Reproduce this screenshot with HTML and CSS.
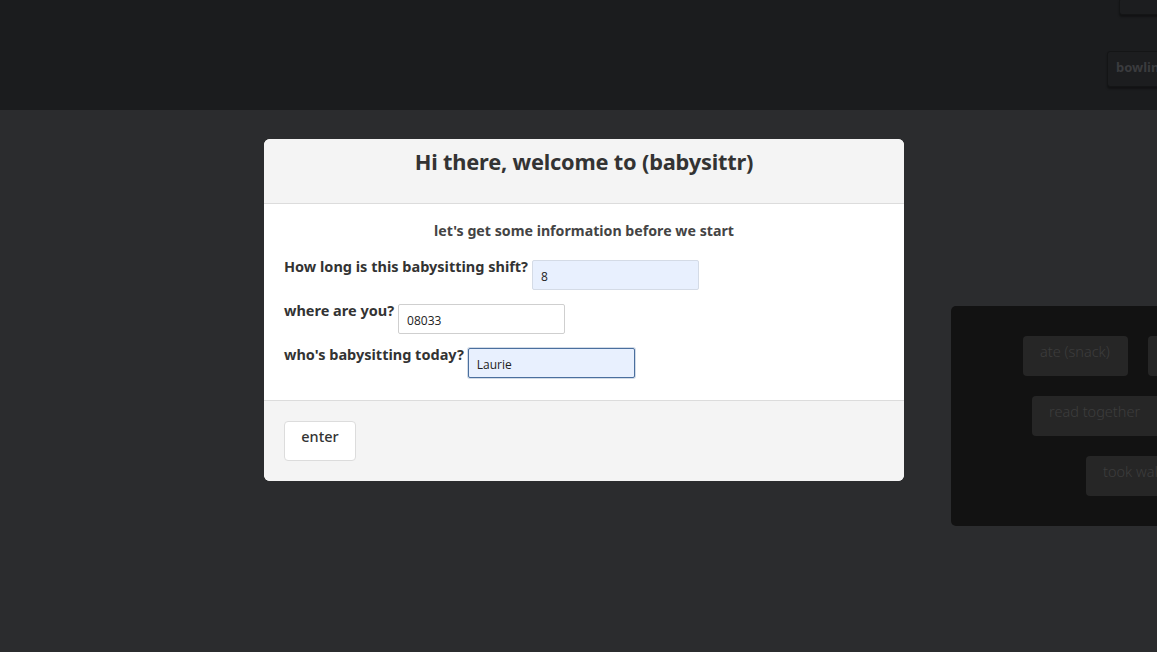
FILE: index.html
```html
<!DOCTYPE html>
<html>
<head>
<meta charset="utf-8">
<link rel="stylesheet" href="styles.css">
</head>
<body>
<div class="page">
  <header class="topbar">
    <div class="top-actions">
      <div class="ghost-btn top-btn"></div>
      <div class="ghost-btn bowl-btn">bowling</div>
    </div>
  </header>
  <main class="main">
    <section class="panel">
      <div class="prow r1"><span class="pbtn">ate (snack)</span><span class="pbtn">napped</span></div>
      <div class="prow r2"><span class="pbtn">read together</span></div>
      <div class="prow r3"><span class="pbtn">took walk</span></div>
    </section>
  </main>
</div>
<div class="overlay">
  <div class="modal">
    <div class="modal-head">
      <h1 class="title">Hi there, welcome to (babysittr)</h1>
    </div>
    <div class="modal-body">
      <p class="intro">let's get some information before we start</p>
      <div class="field"><label class="lbl">How long is this babysitting shift?</label><input class="inp filled" value="8"></div>
      <div class="field"><label class="lbl">where are you?</label><input class="inp" value="08033"></div>
      <div class="field"><label class="lbl">who's babysitting today?</label><input class="inp focused" value="Laurie"></div>
    </div>
    <div class="modal-foot">
      <button class="enter">enter</button>
    </div>
  </div>
</div>
</body>
</html>
```
FILE: styles.css
```css
* { box-sizing: border-box; }
html, body { margin: 0; padding: 0; }
body {
  width: 1157px;
  height: 652px;
  overflow: hidden;
  background: #2b2c2e;
  font-family: "Noto Sans", "Open Sans", sans-serif;
  position: relative;
}
.page { display: flex; flex-direction: column; height: 652px; }
.topbar {
  height: 110px;
  background: #1b1c1e;
  display: flex;
  justify-content: flex-end;
}
.top-actions {
  display: flex;
  flex-direction: column;
  align-items: flex-end;
  margin-right: -60px;
}
.ghost-btn {
  border: 1px solid #141516;
  box-shadow: 0 2px 2px rgba(0,0,0,0.35);
  background: #1c1d1f;
  border-radius: 3px;
}
.top-btn { width: 98px; height: 17px; margin-top: -2px; }
.bowl-btn {
  margin-top: 36px;
  width: 110px;
  height: 36px;
  color: #3a3b3e;
  font-weight: 700;
  font-size: 13px;
  padding: 6px 0 0 8px;
}
.main { flex: 1; display: flex; justify-content: flex-end; }
.panel {
  margin-top: 196px;
  width: 260px;
  height: 220px;
  margin-right: -54px;
  background: #121212;
  border-radius: 5px;
  padding-top: 30px;
}
.prow { display: flex; gap: 20px; height: 40px; margin-bottom: 20px; }
.r1 { padding-left: 72px; }
.r2 { padding-left: 81px; }
.r3 { padding-left: 135px; }
.pbtn {
  background: #262626;
  color: #3d3d3d;
  border-radius: 4px;
  height: 40px;
  padding: 5px 18px 0 17px;
  font-size: 14.5px;
  font-weight: 300;
  white-space: nowrap;
}
.r2 .pbtn { padding-right: 40px; }
.overlay {
  position: absolute;
  inset: 0;
  display: flex;
  justify-content: center;
  align-items: flex-start;
  padding-top: 139px;
}
.modal {
  width: 640px;
  margin-left: 11px;
  background: #fff;
  border-radius: 6px;
  overflow: hidden;
}
.modal-head {
  height: 65px;
  background: #f4f4f4;
  border-bottom: 1px solid #dcdcdc;
  padding-top: 8px;
}
.title {
  margin: 0;
  text-align: center;
  font-size: 21.8px;
  font-weight: 700;
  color: #333;
  letter-spacing: -0.2px;
}
.modal-body {
  height: 197px;
  padding: 17px 20px 0;
  border-bottom: 1px solid #dcdcdc;
}
.intro {
  margin: 0 0 16px;
  text-align: center;
  font-size: 14.2px;
  font-weight: 700;
  color: #444;
}
.field { display: flex; align-items: flex-start; height: 44px; }
.lbl {
  font-size: 14.5px;
  font-weight: 700;
  color: #333;
  margin-right: 4px;
  line-height: 20px;
}
.inp {
  margin-top: 4px;
  width: 167px;
  height: 30px;
  border: 1px solid #cfcfcf;
  border-radius: 2px;
  padding: 2px 8px 0;
  font-family: "Open Sans", sans-serif;
  font-size: 12px;
  color: #222;
  background: #fff;
  outline: none;
}
.filled { background: #e8f0fe; border-color: #d4dbe6; }
.focused { background: #e8f0fe; border: 1px solid #4a6f9e; box-shadow: 0 0 0 1px rgba(74,111,158,0.25); }
.modal-foot {
  height: 80px;
  background: #f4f4f4;
  padding: 20px 20px;
}
.enter {
  width: 72px;
  height: 40px;
  background: #fff;
  border: 1px solid #dcdcdc;
  border-radius: 4px;
  font-family: "Noto Sans", sans-serif;
  font-size: 14.5px;
  font-weight: 500;
  color: #333;
  padding: 0 0 11px;
}
```
